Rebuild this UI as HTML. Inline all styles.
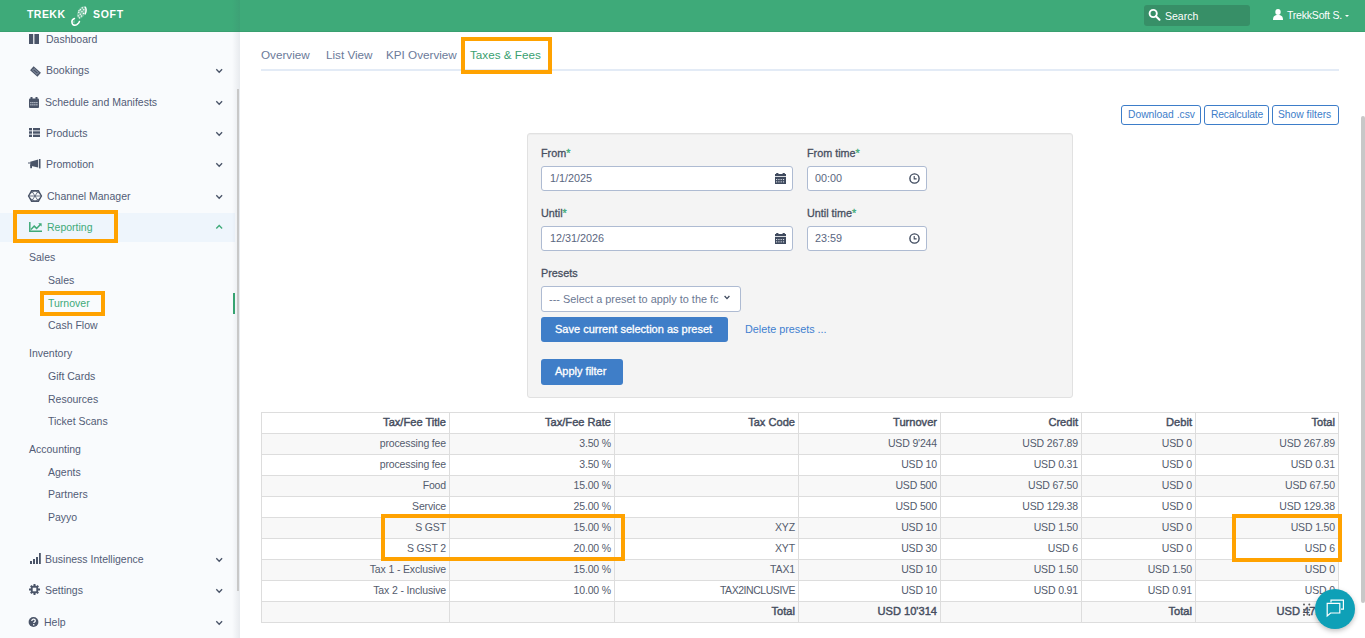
<!DOCTYPE html>
<html><head><meta charset="utf-8">
<style>
*{box-sizing:border-box;margin:0;padding:0}
html,body{width:1365px;height:638px;overflow:hidden;background:#fff;font-family:"Liberation Sans",sans-serif;position:relative}
.a{position:absolute;white-space:nowrap;line-height:14px}
.b{position:absolute}
svg{position:absolute;overflow:visible}
</style></head><body>
<div class="b" style="left:0;top:0;width:1365px;height:32px;background:#3eaa79"></div>
<div class="b" style="left:0;top:31px;width:1365px;height:1px;background:#39a070"></div>
<div class="a" style="left:27px;top:7px;font-size:10.5px;font-weight:bold;color:#fff;letter-spacing:0.45px;">TREKK</div>
<svg style="left:70px;top:4px" width="18" height="23" viewBox="0 0 18 23">
<g transform="rotate(28 11.5 8.5)">
<ellipse cx="11.5" cy="8.5" rx="3.9" ry="6.6" fill="rgba(255,255,255,0.28)"/>
<path d="M11.5 1.9a3.9 6.6 0 0 1 3.9 6.6" fill="none" stroke="#fff" stroke-width="1.5"/>
<g fill="#fff"><circle cx="10" cy="4" r="0.7"/><circle cx="12.2" cy="5" r="0.7"/><circle cx="9.2" cy="6.6" r="0.7"/><circle cx="11.5" cy="7.6" r="0.7"/><circle cx="13.6" cy="8.4" r="0.7"/><circle cx="9" cy="9.6" r="0.7"/><circle cx="11.2" cy="10.6" r="0.7"/><circle cx="13.2" cy="11.6" r="0.7"/><circle cx="10.2" cy="13" r="0.7"/><circle cx="12.2" cy="14.2" r="0.6"/><circle cx="8.4" cy="8" r="0.6"/></g>
</g>
<path d="M4.4 14.6C2.4 15.4 1.6 17.6 2.2 19.4 2.8 21.2 5 21.8 6.8 20.6 8.2 19.6 9.2 18.4 9.4 17.6" fill="none" stroke="#fff" stroke-width="1.6" stroke-linecap="round"/>
<path d="M4.6 16.6C3.8 17.2 3.6 18.4 4.2 19.2" fill="none" stroke="rgba(255,255,255,0.5)" stroke-width="1"/>
</svg>
<div class="a" style="left:93px;top:7px;font-size:10.5px;font-weight:bold;color:#fff;letter-spacing:0.7px;">SOFT</div>
<div class="b" style="left:1144px;top:5px;width:106px;height:21px;background:#378f67;border-radius:3px"></div>
<svg style="left:1147px;top:8px" width="14" height="13" viewBox="0 0 14 13"><circle cx="6.2" cy="5.5" r="3.6" fill="none" stroke="#fff" stroke-width="1.9"/><path d="M8.9 8.3l3.6 3.4" stroke="#fff" stroke-width="2.1" stroke-linecap="round"/></svg>
<div class="a" style="left:1165px;top:9px;font-size:10.5px;color:#fff;">Search</div>
<svg style="left:1273px;top:9px" width="10" height="11" viewBox="0 0 10 11"><ellipse cx="5" cy="3" rx="2.7" ry="3" fill="#fff"/><path d="M0 11c0-3.6 1.4-5 5-5s5 1.4 5 5z" fill="#fff"/></svg>
<div class="a" style="left:1287px;top:8px;font-size:10.5px;color:#fff;letter-spacing:-0.2px;">TrekkSoft S.</div>
<svg style="left:1345px;top:15px" width="4" height="2" viewBox="0 0 4 2"><path d="M0 0h4l-2 2z" fill="#fff"/></svg>
<div class="b" style="left:0;top:32px;width:240px;height:606px;background:#f9fbfd"></div>
<div class="b" style="left:0;top:213px;width:235px;height:29px;background:#eef5fc"></div>
<div class="b" style="left:232px;top:0px;width:8px;height:638px;background:linear-gradient(to right,rgba(60,70,90,0),rgba(60,70,90,0.09))"></div>
<div class="b" style="left:237px;top:89px;width:2px;height:502px;background:#c8c8c8"></div>
<div class="b" style="left:233px;top:293px;width:2px;height:21px;background:#36a371"></div>
<div class="a" style="left:46px;top:32px;font-size:10.5px;color:#525c76;">Dashboard</div>
<div class="a" style="left:46px;top:63px;font-size:10.5px;color:#525c76;">Bookings</div>
<svg style="left:215px;top:68px" width="8" height="6" viewBox="0 0 8 6"><path d="M1.3 1.3l2.9 2.9 2.9-2.9" fill="none" stroke="#4a5468" stroke-width="1.35"/></svg>
<div class="a" style="left:45px;top:95px;font-size:10.5px;color:#525c76;">Schedule and Manifests</div>
<svg style="left:215px;top:100px" width="8" height="6" viewBox="0 0 8 6"><path d="M1.3 1.3l2.9 2.9 2.9-2.9" fill="none" stroke="#4a5468" stroke-width="1.35"/></svg>
<div class="a" style="left:46px;top:126px;font-size:10.5px;color:#525c76;">Products</div>
<svg style="left:215px;top:131px" width="8" height="6" viewBox="0 0 8 6"><path d="M1.3 1.3l2.9 2.9 2.9-2.9" fill="none" stroke="#4a5468" stroke-width="1.35"/></svg>
<div class="a" style="left:46px;top:157px;font-size:10.5px;color:#525c76;">Promotion</div>
<svg style="left:215px;top:162px" width="8" height="6" viewBox="0 0 8 6"><path d="M1.3 1.3l2.9 2.9 2.9-2.9" fill="none" stroke="#4a5468" stroke-width="1.35"/></svg>
<div class="a" style="left:47px;top:189px;font-size:10.5px;color:#525c76;">Channel Manager</div>
<svg style="left:215px;top:194px" width="8" height="6" viewBox="0 0 8 6"><path d="M1.3 1.3l2.9 2.9 2.9-2.9" fill="none" stroke="#4a5468" stroke-width="1.35"/></svg>
<div class="a" style="left:47px;top:220px;font-size:10.5px;color:#3eaa79;">Reporting</div>
<svg style="left:215px;top:224px" width="8" height="6" viewBox="0 0 8 6"><path d="M1.3 4.4l2.9-2.9 2.9 2.9" fill="none" stroke="#3eaa79" stroke-width="1.35"/></svg>
<div class="a" style="left:45px;top:552px;font-size:10.5px;color:#525c76;">Business Intelligence</div>
<svg style="left:215px;top:557px" width="8" height="6" viewBox="0 0 8 6"><path d="M1.3 1.3l2.9 2.9 2.9-2.9" fill="none" stroke="#4a5468" stroke-width="1.35"/></svg>
<div class="a" style="left:45px;top:583px;font-size:10.5px;color:#525c76;">Settings</div>
<svg style="left:215px;top:588px" width="8" height="6" viewBox="0 0 8 6"><path d="M1.3 1.3l2.9 2.9 2.9-2.9" fill="none" stroke="#4a5468" stroke-width="1.35"/></svg>
<div class="a" style="left:44px;top:615px;font-size:10.5px;color:#525c76;">Help</div>
<svg style="left:215px;top:620px" width="8" height="6" viewBox="0 0 8 6"><path d="M1.3 1.3l2.9 2.9 2.9-2.9" fill="none" stroke="#4a5468" stroke-width="1.35"/></svg>
<div class="a" style="left:29px;top:250px;font-size:10.5px;color:#525c76;">Sales</div>
<div class="a" style="left:48px;top:273px;font-size:10.5px;color:#525c76;">Sales</div>
<div class="a" style="left:48px;top:296px;font-size:10.5px;color:#3eaa79;">Turnover</div>
<div class="a" style="left:48px;top:318px;font-size:10.5px;color:#525c76;">Cash Flow</div>
<div class="a" style="left:29px;top:346px;font-size:10.5px;color:#525c76;">Inventory</div>
<div class="a" style="left:48px;top:369px;font-size:10.5px;color:#525c76;">Gift Cards</div>
<div class="a" style="left:48px;top:392px;font-size:10.5px;color:#525c76;">Resources</div>
<div class="a" style="left:48px;top:414px;font-size:10.5px;color:#525c76;">Ticket Scans</div>
<div class="a" style="left:29px;top:442px;font-size:10.5px;color:#525c76;">Accounting</div>
<div class="a" style="left:48px;top:465px;font-size:10.5px;color:#525c76;">Agents</div>
<div class="a" style="left:48px;top:487px;font-size:10.5px;color:#525c76;">Partners</div>
<div class="a" style="left:48px;top:510px;font-size:10.5px;color:#525c76;">Payyo</div>
<svg style="left:29px;top:34px" width="10" height="10"><rect x="0" y="0" width="4.2" height="10" fill="#4a5468"/><rect x="5.4" y="0" width="4.6" height="10" fill="#4a5468"/></svg>
<svg style="left:29px;top:65px" width="13" height="13" viewBox="0 0 13 13"><g transform="rotate(42 6.5 6.5)"><rect x="1.6" y="3.9" width="9.8" height="5.2" fill="#4a5468"/><rect x="3.4" y="5.4" width="6.2" height="2.2" fill="none" stroke="#9aa3b3" stroke-width="0.8"/></g></svg>
<svg style="left:29px;top:97px" width="10" height="11" viewBox="0 0 10 11"><rect x="0" y="1.5" width="10" height="9.5" rx="1" fill="#4a5468"/><rect x="1.5" y="0" width="2" height="2.5" fill="#4a5468"/><rect x="6.5" y="0" width="2" height="2.5" fill="#4a5468"/><g fill="#cdd3dd"><rect x="1.3" y="5" width="1.2" height="1.2"/><rect x="3.3" y="5" width="1.2" height="1.2"/><rect x="5.3" y="5" width="1.2" height="1.2"/><rect x="7.3" y="5" width="1.2" height="1.2"/><rect x="1.3" y="7.2" width="1.2" height="1.2"/><rect x="3.3" y="7.2" width="1.2" height="1.2"/><rect x="5.3" y="7.2" width="1.2" height="1.2"/><rect x="7.3" y="7.2" width="1.2" height="1.2"/></g></svg>
<svg style="left:29px;top:128px" width="11" height="9"><g fill="#4a5468"><rect x="0" y="0" width="3" height="2.4"/><rect x="4" y="0" width="7" height="2.4"/><rect x="0" y="3.3" width="3" height="2.4"/><rect x="4" y="3.3" width="7" height="2.4"/><rect x="0" y="6.6" width="3" height="2.4"/><rect x="4" y="6.6" width="7" height="2.4"/></g></svg>
<svg style="left:28px;top:159px" width="13" height="10" viewBox="0 0 13 10"><g fill="#4a5468"><rect x="0.4" y="3.2" width="1.2" height="1.6"/><path d="M2.2 2.8L10.2 0.6V8.6L2.2 6.8z"/><rect x="2.2" y="6" width="1.8" height="3.2"/><rect x="11" y="0" width="1.5" height="9.4"/></g></svg>
<svg style="left:28px;top:190px" width="14" height="12" viewBox="0 0 14 12"><g fill="none" stroke="#4a5468"><path d="M3.6 0.8h6.8l3 5.2-3 5.2H3.6L0.6 6z" stroke-width="1.4"/><path d="M3.6 0.8L10.4 11.2M10.4 0.8L3.6 11.2M0.6 6h12.8M2.1 3.4L7 0.8 11.9 3.4M2.1 8.6L7 11.2 11.9 8.6" stroke-width="0.8"/></g></svg>
<svg style="left:29px;top:222px" width="13" height="10" viewBox="0 0 13 10"><g fill="none" stroke="#3eaa79" stroke-width="1.5"><path d="M0.8 0v9.2H13"/><path d="M2 7.4l3.2-3.3 2.4 2.3 3.8-4"/></g><path d="M9.2 1.2h3.4v3.4z" fill="#3eaa79"/></svg>
<svg style="left:29px;top:553px" width="12" height="11"><g fill="#4a5468"><rect x="1" y="8" width="2" height="3"/><rect x="4" y="6" width="2" height="5"/><rect x="7" y="4" width="2" height="7"/><rect x="10" y="0" width="1.8" height="11"/></g></svg>
<svg style="left:29px;top:584px" width="11" height="11" viewBox="0 0 11 11"><g fill="#4a5468" transform="translate(5.5 5.5)"><rect x="-1" y="-5.5" width="2" height="11"/><rect x="-5.5" y="-1" width="11" height="2"/><rect x="-1" y="-5.3" width="2" height="10.6" transform="rotate(45)"/><rect x="-1" y="-5.3" width="2" height="10.6" transform="rotate(-45)"/><circle r="3.9"/></g><rect x="3.7" y="3.7" width="3.6" height="3.6" fill="#f9fbfd"/></svg>
<svg style="left:28px;top:617px" width="11" height="11" viewBox="0 0 11 11"><circle cx="5.5" cy="5" r="4.9" fill="#4a5468"/><path d="M3.8 3.9c0-1.1 0.8-1.7 1.8-1.7s1.7 0.6 1.7 1.5c0 1.2-1.5 1.2-1.5 2.4" fill="none" stroke="#f9fbfd" stroke-width="1.3"/><rect x="5" y="7.1" width="1.4" height="1.3" fill="#f9fbfd"/></svg>
<div class="a" style="left:261px;top:48px;font-size:11.7px;color:#6b7a99;">Overview</div>
<div class="a" style="left:326px;top:48px;font-size:11.7px;color:#6b7a99;">List View</div>
<div class="a" style="left:386px;top:48px;font-size:11.7px;color:#6b7a99;">KPI Overview</div>
<div class="a" style="left:470px;top:48px;font-size:11.7px;color:#3a9f70;">Taxes &amp; Fees</div>
<div class="b" style="left:261px;top:69px;width:1078px;height:2px;background:#e3ebf6"></div>
<div class="b" style="left:1121px;top:105px;width:80px;height:20px;border:1px solid #3d7dc9;border-radius:3px"></div>
<div class="a" style="left:1128px;top:108px;font-size:10.3px;color:#3d7dc9;">Download .csv</div>
<div class="b" style="left:1204px;top:105px;width:65px;height:20px;border:1px solid #3d7dc9;border-radius:3px"></div>
<div class="a" style="left:1211px;top:108px;font-size:10.3px;color:#3d7dc9;letter-spacing:-0.15px;">Recalculate</div>
<div class="b" style="left:1272px;top:105px;width:67px;height:20px;border:1px solid #3d7dc9;border-radius:3px"></div>
<div class="a" style="left:1278px;top:108px;font-size:10.3px;color:#3d7dc9;">Show filters</div>
<div class="b" style="left:527px;top:133px;width:546px;height:265px;background:#f4f4f4;border:1px solid #e1e1e1;border-radius:3px;box-shadow:inset 0 1px 1px rgba(0,0,0,0.03)"></div>
<div class="a" style="left:541px;top:146px;font-size:10.8px;-webkit-text-stroke:0.3px #474f60;color:#474f60;">From<span style="color:#3eaa79;-webkit-text-stroke:0.3px #3eaa79">*</span></div>
<div class="a" style="left:807px;top:146px;font-size:10.8px;-webkit-text-stroke:0.3px #474f60;color:#474f60;">From time<span style="color:#3eaa79;-webkit-text-stroke:0.3px #3eaa79">*</span></div>
<div class="a" style="left:541px;top:206px;font-size:10.8px;-webkit-text-stroke:0.3px #474f60;color:#474f60;">Until<span style="color:#3eaa79;-webkit-text-stroke:0.3px #3eaa79">*</span></div>
<div class="a" style="left:807px;top:206px;font-size:10.8px;-webkit-text-stroke:0.3px #474f60;color:#474f60;">Until time<span style="color:#3eaa79;-webkit-text-stroke:0.3px #3eaa79">*</span></div>
<div class="a" style="left:541px;top:266px;font-size:10.8px;-webkit-text-stroke:0.3px #474f60;color:#474f60;">Presets</div>
<div class="b" style="left:541px;top:166px;width:252px;height:25px;background:#fff;border:1px solid #aebbd2;border-radius:3px"></div>
<div class="a" style="left:550px;top:171px;font-size:10.8px;color:#596680;">1/1/2025</div>
<div class="b" style="left:807px;top:166px;width:120px;height:25px;background:#fff;border:1px solid #aebbd2;border-radius:3px"></div>
<div class="a" style="left:815px;top:171px;font-size:10.8px;color:#596680;">00:00</div>
<div class="b" style="left:541px;top:226px;width:252px;height:25px;background:#fff;border:1px solid #aebbd2;border-radius:3px"></div>
<div class="a" style="left:550px;top:231px;font-size:10.8px;color:#596680;">12/31/2026</div>
<div class="b" style="left:807px;top:226px;width:120px;height:25px;background:#fff;border:1px solid #aebbd2;border-radius:3px"></div>
<div class="a" style="left:815px;top:231px;font-size:10.8px;color:#596680;">23:59</div>
<svg style="left:775px;top:173px" width="11" height="11" viewBox="0 0 11 11"><g fill="#3f4a5e"><rect x="1.2" y="0" width="2.2" height="1.6"/><rect x="7.6" y="0" width="2.2" height="1.6"/><rect x="0" y="1" width="11" height="2.2"/><rect x="0" y="4" width="11" height="7"/></g><g fill="#d5dae2"><rect x="1" y="6" width="1.2" height="1.1"/><rect x="3.3" y="6" width="1.2" height="1.1"/><rect x="5.6" y="6" width="1.2" height="1.1"/><rect x="7.9" y="6" width="1.2" height="1.1"/><rect x="1" y="8.3" width="1.2" height="1.1"/><rect x="3.3" y="8.3" width="1.2" height="1.1"/><rect x="5.6" y="8.3" width="1.2" height="1.1"/><rect x="7.9" y="8.3" width="1.2" height="1.1"/></g></svg>
<svg style="left:775px;top:233px" width="11" height="11" viewBox="0 0 11 11"><g fill="#3f4a5e"><rect x="1.2" y="0" width="2.2" height="1.6"/><rect x="7.6" y="0" width="2.2" height="1.6"/><rect x="0" y="1" width="11" height="2.2"/><rect x="0" y="4" width="11" height="7"/></g><g fill="#d5dae2"><rect x="1" y="6" width="1.2" height="1.1"/><rect x="3.3" y="6" width="1.2" height="1.1"/><rect x="5.6" y="6" width="1.2" height="1.1"/><rect x="7.9" y="6" width="1.2" height="1.1"/><rect x="1" y="8.3" width="1.2" height="1.1"/><rect x="3.3" y="8.3" width="1.2" height="1.1"/><rect x="5.6" y="8.3" width="1.2" height="1.1"/><rect x="7.9" y="8.3" width="1.2" height="1.1"/></g></svg>
<svg style="left:909px;top:173px" width="11" height="11" viewBox="0 0 11 11"><circle cx="5.5" cy="5.5" r="4.6" fill="none" stroke="#3f4a5e" stroke-width="1.4"/><path d="M5.2 3v2.9h2.4" fill="none" stroke="#3f4a5e" stroke-width="1.1"/></svg>
<svg style="left:909px;top:233px" width="11" height="11" viewBox="0 0 11 11"><circle cx="5.5" cy="5.5" r="4.6" fill="none" stroke="#3f4a5e" stroke-width="1.4"/><path d="M5.2 3v2.9h2.4" fill="none" stroke="#3f4a5e" stroke-width="1.1"/></svg>
<div class="b" style="left:541px;top:286px;width:200px;height:26px;background:#fff;border:1px solid #aebbd2;border-radius:3px"></div>
<div class="a" style="left:549px;top:292px;font-size:10.9px;color:#6b7893;width:173px;overflow:hidden">--- Select a preset to apply to the fc</div>
<svg style="left:724px;top:295px" width="6" height="5" viewBox="0 0 6 5"><path d="M0.6 1l2.4 2.6L5.4 1" fill="none" stroke="#3f4a5e" stroke-width="1.3"/></svg>
<div class="b" style="left:541px;top:317px;width:187px;height:25px;background:#3f7ec8;border-radius:3px"></div>
<div class="a" style="left:555px;top:322px;font-size:11px;-webkit-text-stroke:0.3px #fff;color:#fff;">Save current selection as preset</div>
<div class="a" style="left:745px;top:322px;font-size:10.8px;color:#3f7fd0;">Delete presets ...</div>
<div class="b" style="left:541px;top:359px;width:82px;height:26px;background:#3f7ec8;border-radius:3px"></div>
<div class="a" style="left:555px;top:364px;font-size:11px;-webkit-text-stroke:0.3px #fff;color:#fff;">Apply filter</div>
<div class="b" style="left:261px;top:433px;width:1078px;height:21px;background:#f8f8f8"></div>
<div class="b" style="left:261px;top:475px;width:1078px;height:21px;background:#f8f8f8"></div>
<div class="b" style="left:261px;top:517px;width:1078px;height:21px;background:#f8f8f8"></div>
<div class="b" style="left:261px;top:559px;width:1078px;height:21px;background:#f8f8f8"></div>
<div class="b" style="left:261px;top:601px;width:1078px;height:21px;background:#f8f8f8"></div>
<div class="b" style="left:261px;top:412px;width:1078px;height:1px;background:#dddddd"></div>
<div class="b" style="left:261px;top:433px;width:1078px;height:1px;background:#dddddd"></div>
<div class="b" style="left:261px;top:454px;width:1078px;height:1px;background:#dddddd"></div>
<div class="b" style="left:261px;top:475px;width:1078px;height:1px;background:#dddddd"></div>
<div class="b" style="left:261px;top:496px;width:1078px;height:1px;background:#dddddd"></div>
<div class="b" style="left:261px;top:517px;width:1078px;height:1px;background:#dddddd"></div>
<div class="b" style="left:261px;top:538px;width:1078px;height:1px;background:#dddddd"></div>
<div class="b" style="left:261px;top:559px;width:1078px;height:1px;background:#dddddd"></div>
<div class="b" style="left:261px;top:580px;width:1078px;height:1px;background:#dddddd"></div>
<div class="b" style="left:261px;top:601px;width:1078px;height:1px;background:#dddddd"></div>
<div class="b" style="left:261px;top:622px;width:1078px;height:1px;background:#dddddd"></div>
<div class="b" style="left:261px;top:412px;width:1px;height:211px;background:#dddddd"></div>
<div class="b" style="left:449px;top:412px;width:1px;height:211px;background:#dddddd"></div>
<div class="b" style="left:614px;top:412px;width:1px;height:211px;background:#dddddd"></div>
<div class="b" style="left:798px;top:412px;width:1px;height:211px;background:#dddddd"></div>
<div class="b" style="left:940px;top:412px;width:1px;height:211px;background:#dddddd"></div>
<div class="b" style="left:1081px;top:412px;width:1px;height:211px;background:#dddddd"></div>
<div class="b" style="left:1195px;top:412px;width:1px;height:211px;background:#dddddd"></div>
<div class="b" style="left:1338px;top:412px;width:1px;height:211px;background:#dddddd"></div>
<div class="a" style="right:919px;top:415px;font-size:11.1px;-webkit-text-stroke:0.42px #454d5e;color:#454d5e;">Tax/Fee Title</div>
<div class="a" style="right:754px;top:415px;font-size:11.1px;-webkit-text-stroke:0.42px #454d5e;color:#454d5e;">Tax/Fee Rate</div>
<div class="a" style="right:570px;top:415px;font-size:11.1px;-webkit-text-stroke:0.42px #454d5e;color:#454d5e;">Tax Code</div>
<div class="a" style="right:428px;top:415px;font-size:11.1px;-webkit-text-stroke:0.42px #454d5e;color:#454d5e;">Turnover</div>
<div class="a" style="right:287px;top:415px;font-size:11.1px;-webkit-text-stroke:0.42px #454d5e;color:#454d5e;">Credit</div>
<div class="a" style="right:173px;top:415px;font-size:11.1px;-webkit-text-stroke:0.42px #454d5e;color:#454d5e;">Debit</div>
<div class="a" style="right:30px;top:415px;font-size:11.1px;-webkit-text-stroke:0.42px #454d5e;color:#454d5e;">Total</div>
<div class="a" style="right:919px;top:436px;font-size:10.5px;color:#535b6d;letter-spacing:-0.15px;">processing fee</div>
<div class="a" style="right:754px;top:436px;font-size:10.5px;color:#535b6d;letter-spacing:-0.15px;">3.50 %</div>
<div class="a" style="right:428px;top:436px;font-size:10.5px;color:#535b6d;letter-spacing:-0.15px;">USD 9'244</div>
<div class="a" style="right:287px;top:436px;font-size:10.5px;color:#535b6d;letter-spacing:-0.15px;">USD 267.89</div>
<div class="a" style="right:173px;top:436px;font-size:10.5px;color:#535b6d;letter-spacing:-0.15px;">USD 0</div>
<div class="a" style="right:30px;top:436px;font-size:10.5px;color:#535b6d;letter-spacing:-0.15px;">USD 267.89</div>
<div class="a" style="right:919px;top:457px;font-size:10.5px;color:#535b6d;letter-spacing:-0.15px;">processing fee</div>
<div class="a" style="right:754px;top:457px;font-size:10.5px;color:#535b6d;letter-spacing:-0.15px;">3.50 %</div>
<div class="a" style="right:428px;top:457px;font-size:10.5px;color:#535b6d;letter-spacing:-0.15px;">USD 10</div>
<div class="a" style="right:287px;top:457px;font-size:10.5px;color:#535b6d;letter-spacing:-0.15px;">USD 0.31</div>
<div class="a" style="right:173px;top:457px;font-size:10.5px;color:#535b6d;letter-spacing:-0.15px;">USD 0</div>
<div class="a" style="right:30px;top:457px;font-size:10.5px;color:#535b6d;letter-spacing:-0.15px;">USD 0.31</div>
<div class="a" style="right:919px;top:478px;font-size:10.5px;color:#535b6d;letter-spacing:-0.15px;">Food</div>
<div class="a" style="right:754px;top:478px;font-size:10.5px;color:#535b6d;letter-spacing:-0.15px;">15.00 %</div>
<div class="a" style="right:428px;top:478px;font-size:10.5px;color:#535b6d;letter-spacing:-0.15px;">USD 500</div>
<div class="a" style="right:287px;top:478px;font-size:10.5px;color:#535b6d;letter-spacing:-0.15px;">USD 67.50</div>
<div class="a" style="right:173px;top:478px;font-size:10.5px;color:#535b6d;letter-spacing:-0.15px;">USD 0</div>
<div class="a" style="right:30px;top:478px;font-size:10.5px;color:#535b6d;letter-spacing:-0.15px;">USD 67.50</div>
<div class="a" style="right:919px;top:499px;font-size:10.5px;color:#535b6d;letter-spacing:-0.15px;">Service</div>
<div class="a" style="right:754px;top:499px;font-size:10.5px;color:#535b6d;letter-spacing:-0.15px;">25.00 %</div>
<div class="a" style="right:428px;top:499px;font-size:10.5px;color:#535b6d;letter-spacing:-0.15px;">USD 500</div>
<div class="a" style="right:287px;top:499px;font-size:10.5px;color:#535b6d;letter-spacing:-0.15px;">USD 129.38</div>
<div class="a" style="right:173px;top:499px;font-size:10.5px;color:#535b6d;letter-spacing:-0.15px;">USD 0</div>
<div class="a" style="right:30px;top:499px;font-size:10.5px;color:#535b6d;letter-spacing:-0.15px;">USD 129.38</div>
<div class="a" style="right:919px;top:520px;font-size:10.5px;color:#535b6d;letter-spacing:-0.15px;">S GST</div>
<div class="a" style="right:754px;top:520px;font-size:10.5px;color:#535b6d;letter-spacing:-0.15px;">15.00 %</div>
<div class="a" style="right:570px;top:520px;font-size:10.5px;color:#535b6d;letter-spacing:-0.15px;">XYZ</div>
<div class="a" style="right:428px;top:520px;font-size:10.5px;color:#535b6d;letter-spacing:-0.15px;">USD 10</div>
<div class="a" style="right:287px;top:520px;font-size:10.5px;color:#535b6d;letter-spacing:-0.15px;">USD 1.50</div>
<div class="a" style="right:173px;top:520px;font-size:10.5px;color:#535b6d;letter-spacing:-0.15px;">USD 0</div>
<div class="a" style="right:30px;top:520px;font-size:10.5px;color:#535b6d;letter-spacing:-0.15px;">USD 1.50</div>
<div class="a" style="right:919px;top:541px;font-size:10.5px;color:#535b6d;letter-spacing:-0.15px;">S GST 2</div>
<div class="a" style="right:754px;top:541px;font-size:10.5px;color:#535b6d;letter-spacing:-0.15px;">20.00 %</div>
<div class="a" style="right:570px;top:541px;font-size:10.5px;color:#535b6d;letter-spacing:-0.15px;">XYT</div>
<div class="a" style="right:428px;top:541px;font-size:10.5px;color:#535b6d;letter-spacing:-0.15px;">USD 30</div>
<div class="a" style="right:287px;top:541px;font-size:10.5px;color:#535b6d;letter-spacing:-0.15px;">USD 6</div>
<div class="a" style="right:173px;top:541px;font-size:10.5px;color:#535b6d;letter-spacing:-0.15px;">USD 0</div>
<div class="a" style="right:30px;top:541px;font-size:10.5px;color:#535b6d;letter-spacing:-0.15px;">USD 6</div>
<div class="a" style="right:919px;top:562px;font-size:10.5px;color:#535b6d;letter-spacing:-0.15px;">Tax 1 - Exclusive</div>
<div class="a" style="right:754px;top:562px;font-size:10.5px;color:#535b6d;letter-spacing:-0.15px;">15.00 %</div>
<div class="a" style="right:570px;top:562px;font-size:10.5px;color:#535b6d;letter-spacing:-0.15px;">TAX1</div>
<div class="a" style="right:428px;top:562px;font-size:10.5px;color:#535b6d;letter-spacing:-0.15px;">USD 10</div>
<div class="a" style="right:287px;top:562px;font-size:10.5px;color:#535b6d;letter-spacing:-0.15px;">USD 1.50</div>
<div class="a" style="right:173px;top:562px;font-size:10.5px;color:#535b6d;letter-spacing:-0.15px;">USD 1.50</div>
<div class="a" style="right:30px;top:562px;font-size:10.5px;color:#535b6d;letter-spacing:-0.15px;">USD 0</div>
<div class="a" style="right:919px;top:583px;font-size:10.5px;color:#535b6d;letter-spacing:-0.15px;">Tax 2 - Inclusive</div>
<div class="a" style="right:754px;top:583px;font-size:10.5px;color:#535b6d;letter-spacing:-0.15px;">10.00 %</div>
<div class="a" style="right:570px;top:583px;font-size:10.5px;color:#535b6d;letter-spacing:-0.45px;">TAX2INCLUSIVE</div>
<div class="a" style="right:428px;top:583px;font-size:10.5px;color:#535b6d;letter-spacing:-0.15px;">USD 10</div>
<div class="a" style="right:287px;top:583px;font-size:10.5px;color:#535b6d;letter-spacing:-0.15px;">USD 0.91</div>
<div class="a" style="right:173px;top:583px;font-size:10.5px;color:#535b6d;letter-spacing:-0.15px;">USD 0.91</div>
<div class="a" style="right:30px;top:583px;font-size:10.5px;color:#535b6d;letter-spacing:-0.15px;">USD 0</div>
<div class="a" style="right:570px;top:604px;font-size:11.1px;-webkit-text-stroke:0.42px #454d5e;color:#454d5e;">Total</div>
<div class="a" style="right:428px;top:604px;font-size:11.1px;-webkit-text-stroke:0.42px #454d5e;color:#454d5e;">USD 10'314</div>
<div class="a" style="right:173px;top:604px;font-size:11.1px;-webkit-text-stroke:0.42px #454d5e;color:#454d5e;">Total</div>
<div class="a" style="right:28px;top:604px;font-size:11.1px;-webkit-text-stroke:0.42px #454d5e;color:#454d5e;">USD 472.58</div>
<svg style="left:1302px;top:603px" width="9" height="13"><g fill="#5a5a5a"><circle cx="2" cy="1.5" r="1"/><circle cx="7.3" cy="1.5" r="1"/><circle cx="2" cy="6.7" r="1"/><circle cx="7.3" cy="6.7" r="1"/><circle cx="2" cy="11.9" r="1"/><circle cx="7.3" cy="11.9" r="1"/></g></svg>
<div class="b" style="left:13px;top:210px;width:105px;height:33px;border:4px solid #ffa200"></div>
<div class="b" style="left:40px;top:291px;width:65px;height:25px;border:4px solid #ffa200"></div>
<div class="b" style="left:461px;top:37px;width:91px;height:37px;border:4px solid #ffa200"></div>
<div class="b" style="left:381px;top:514px;width:244px;height:47px;border:4px solid #ffa200"></div>
<div class="b" style="left:1232px;top:514px;width:110px;height:48px;border:4px solid #ffa200"></div>
<div class="b" style="left:1361px;top:116px;width:4px;height:487px;background:#c8c8c8;border-radius:2px"></div>
<div class="b" style="left:1315px;top:589px;width:40px;height:40px;border-radius:50%;background:#0ea0b7;box-shadow:0 2px 5px rgba(0,0,0,0.25)"></div>
<svg style="left:1326px;top:599px" width="19" height="19" viewBox="0 0 19 19"><g fill="none" stroke="#fff" stroke-width="1.2"><path d="M5 3.5V1.2h12.4v9H15"/><path d="M1.2 4.4h12.6v9.6H4.6L1.2 17z"/></g></svg>
</body></html>
